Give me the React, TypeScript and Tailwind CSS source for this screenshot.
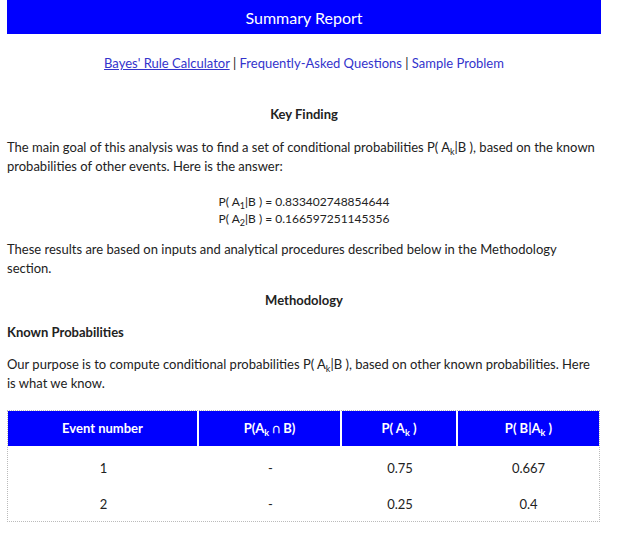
import React from "react";

const Sub = ({ children }: { children: React.ReactNode }) => (
  <span className="inline-block text-[9px] leading-none translate-y-[3px]">{children}</span>
);

export default function App() {
  return (
    <div className="w-[624px] h-[541px] bg-white text-[#222] text-[13px] leading-[19px] pl-[7px] pr-[23px]" style={{ fontFamily: 'Lato, "Noto Sans", sans-serif' }}>
      <div className="bg-[#0000ff] text-white text-[16px] h-[34px] flex items-center justify-center">Summary Report</div>
      <div className="text-center mt-[20px] text-[13px] leading-[19px] text-[#3333cc]">
        <a className="underline">Bayes' Rule Calculator</a>
        <span className="text-[#222]"> | </span>
        <a>Frequently-Asked Questions</a>
        <span className="text-[#222]"> | </span>
        <a>Sample Problem</a>
      </div>
      <div className="text-center font-bold mt-[32px] text-[13px]">Key Finding</div>
      <p className="mt-[14px] text-[13px] leading-[19px]">
        The main goal of this analysis was to find a set of conditional probabilities P( A<Sub>k</Sub>|B ), based on the known probabilities of other events. Here is the answer:
      </p>
      <div className="text-center mt-[17px] text-[12px] leading-[17px]">
        <div>P( A<Sub>1</Sub>|B ) = 0.833402748854644</div>
        <div>P( A<Sub>2</Sub>|B ) = 0.166597251145356</div>
      </div>
      <p className="mt-[13px] text-[13px] leading-[19px]">
        These results are based on inputs and analytical procedures described below in the Methodology section.
      </p>
      <div className="text-center font-bold mt-[13px] text-[13px]">Methodology</div>
      <div className="font-bold mt-[13px] text-[13px]">Known Probabilities</div>
      <p className="mt-[13px] text-[13px] leading-[19px]">
        Our purpose is to compute conditional probabilities P( A<Sub>k</Sub>|B ), based on other known probabilities. Here is what we know.
      </p>
      <table className="mt-[17px] w-[593px] border border-dotted border-[#bbb] border-separate border-spacing-0 text-[13px]">
        <thead>
          <tr className="h-[35px] text-white font-bold">
            <th className="bg-[#0000ff] w-[191px] border-r-2 border-white font-bold">Event number</th>
            <th className="bg-[#0000ff] w-[143px] border-r-2 border-white font-bold">P(A<Sub>k</Sub> ∩ B)</th>
            <th className="bg-[#0000ff] w-[116px] border-r-2 border-white font-bold">P( A<Sub>k</Sub> )</th>
            <th className="bg-[#0000ff] font-bold">P( B|A<Sub>k</Sub> )</th>
          </tr>
        </thead>
        <tbody>
          <tr className="h-[41px] text-center">
            <td className="pt-[3px]">1</td><td className="pt-[3px]">-</td><td className="pt-[3px]">0.75</td><td className="pt-[3px]">0.667</td>
          </tr>
          <tr className="h-[34px] text-center">
            <td className="pt-[1px]">2</td><td className="pt-[1px]">-</td><td className="pt-[1px]">0.25</td><td className="pt-[1px]">0.4</td>
          </tr>
        </tbody>
      </table>
    </div>
  );
}
